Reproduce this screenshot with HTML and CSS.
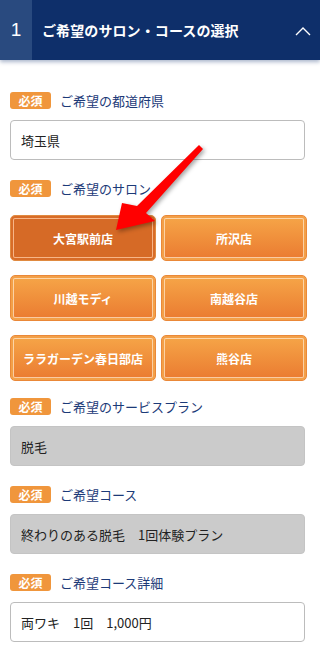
FILE: index.html
```html
<!DOCTYPE html>
<html lang="ja">
<head>
    <meta charset="UTF-8">
    <meta name="viewport" content="width=device-width, initial-scale=1.0">
    <title>ご希望のサロン・コースの選択</title>
    <link rel="stylesheet" href="styles.css">
</head>
<body>
    <div class="section">
        <div class="section-head">
            <div class="step-num">1</div>
            <h2 class="step-title">ご希望のサロン・コースの選択</h2>
            <svg class="chevron" width="16" height="10" viewBox="0 0 16 10">
                <polyline points="1,9 8,2 15,9" fill="none" stroke="#fff" stroke-width="1.4"/>
            </svg>
        </div>

        <div class="form">
            <div class="field">
                <div class="field-label"><span class="badge">必須</span>ご希望の都道府県</div>
                <div class="input">埼玉県</div>
            </div>

            <div class="field field-salon">
                <div class="field-label"><span class="badge">必須</span>ご希望のサロン</div>
                <div class="salons">
                    <button class="salon active">大宮駅前店</button>
                    <button class="salon">所沢店</button>
                    <button class="salon">川越モディ</button>
                    <button class="salon">南越谷店</button>
                    <button class="salon">ララガーデン春日部店</button>
                    <button class="salon">熊谷店</button>
                </div>
            </div>

            <div class="field">
                <div class="field-label"><span class="badge">必須</span>ご希望のサービスプラン</div>
                <div class="input disabled">脱毛</div>
            </div>

            <div class="field">
                <div class="field-label"><span class="badge">必須</span>ご希望コース</div>
                <div class="input disabled">終わりのある脱毛　1回体験プラン</div>
            </div>

            <div class="field">
                <div class="field-label"><span class="badge">必須</span>ご希望コース詳細</div>
                <div class="input">両ワキ　1回　1,000円</div>
            </div>
        </div>

        <!-- pointer drawn over the page -->
        <svg class="pointer" width="320" height="655" viewBox="0 0 320 655">
            <polygon points="199,145 203,149 146,213 155,221 116,230 122,203 137,206" fill="#f00"/>
        </svg>
    </div>
</body>
</html>
```

FILE: styles.css
```css
body {
    margin: 0;
    font-family: "Noto Sans CJK JP", "Noto Sans", sans-serif;
    background: #fff;
    color: #222;
}

.section {
    position: relative;
    width: 320px;
    height: 655px;
    overflow: hidden;
}

.section-head {
    display: flex;
    align-items: center;
    height: 60px;
    background: #0e2f6a;
    box-shadow: 0 2px 4px rgba(14, 47, 106, 0.35);
    color: #fff;
}

.step-num {
    width: 32px;
    height: 100%;
    display: flex;
    align-items: center;
    justify-content: center;
    background: #294a7f;
    font-family: "Liberation Sans", Arial, sans-serif;
    font-size: 19px;
}

.step-title {
    flex: 1;
    margin: 0 0 0 10px;
    font-size: 14px;
    font-weight: 700;
    letter-spacing: 0.1px;
}

.chevron {
    margin-right: 9px;
    margin-top: 1px;
}

.form {
    padding: 32px 15px 0 10px;
}

.field {
    margin-bottom: 20px;
}

.field-salon {
    margin-bottom: 17px;
}

.field-label {
    display: flex;
    align-items: center;
    height: 17px;
    margin-bottom: 11px;
    font-size: 13px;
    color: #1c3a78;
}

.badge {
    display: inline-flex;
    align-items: center;
    justify-content: center;
    width: 41px;
    height: 17px;
    margin-right: 9px;
    border-radius: 3px;
    background: #f0963c;
    color: #fff;
    font-size: 12px;
    font-weight: 700;
}

.input {
    display: flex;
    align-items: center;
    height: 38px;
    padding: 0 10px;
    border: 1px solid #bcbcbc;
    border-radius: 4px;
    font-size: 13px;
    color: #222;
}

.input.disabled {
    background: #cbcbcb;
    border-color: #c4c4c4;
}

.salons {
    display: grid;
    grid-template-columns: 1fr 1fr;
    column-gap: 5px;
    row-gap: 14px;
    margin-top: 18px;
    margin-right: -2px;
}

.salon {
    height: 46px;
    padding: 0;
    border: 1px solid #ea8838;
    border-radius: 5px;
    background: linear-gradient(to bottom, #f6a648, #ea7a30);
    box-shadow: inset 0 0 0 2px #f3a048, inset 0 0 0 3px rgba(255, 230, 200, 0.75);
    color: #fff;
    font-family: inherit;
    font-size: 12px;
    font-weight: 700;
    cursor: pointer;
}

.salon.active {
    background: #d66a26;
    border-color: #e08a40;
    box-shadow: inset 0 0 0 2px #d86c28, inset 0 0 0 3px rgba(255, 200, 160, 0.8);
}

.pointer {
    position: absolute;
    left: 0;
    top: 0;
    pointer-events: none;
    filter: drop-shadow(2px 2px 2px rgba(0, 0, 0, 0.35));
}
```
